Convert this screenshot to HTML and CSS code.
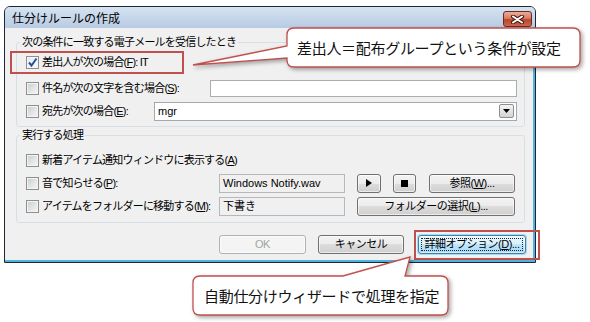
FILE: index.html
```html
<!doctype html>
<html>
  <head>
    <meta charset="utf-8">
    <title>仕分けルールの作成</title>
    <link rel="stylesheet" href="styles.css">
  </head>
  <body>
    <div class="stage">

      <div class="window">
        <div class="titlebar">
          <span class="title">仕分けルールの作成</span>
          <span class="close">
            <svg width="15" height="9" viewBox="0 0 15 9">
              <path d="M3 1.5 L12 7.5 M12 1.5 L3 7.5" stroke="#4a1a10" stroke-width="4" stroke-linecap="round"/>
              <path d="M3 1.5 L12 7.5 M12 1.5 L3 7.5" stroke="#fff" stroke-width="2" stroke-linecap="round"/>
            </svg>
          </span>
        </div>

        <div class="client">
          <div class="group g-cond">
            <div class="legend">次の条件に一致する電子メールを受信したとき</div>
            <div class="row r1">
              <span class="cb checked">
                <svg width="11" height="11" viewBox="0 0 11 11"><path d="M2 5.5 L4.5 8.5 L9.5 1.5" fill="none" stroke="#2a4f9c" stroke-width="2"/></svg>
              </span>
              <span class="lbl">差出人が次の場合(<u>F</u>): IT</span>
            </div>
            <div class="row r2">
              <span class="cb"></span>
              <span class="lbl">件名が次の文字を含む場合(<u>S</u>):</span>
              <span class="field subject"></span>
            </div>
            <div class="row r3">
              <span class="cb"></span>
              <span class="lbl">宛先が次の場合(<u>E</u>):</span>
              <span class="field combo">mgr
                <span class="drop"><svg width="7" height="4" viewBox="0 0 7 4"><path d="M0 0 H7 L3.5 4 Z" fill="#000"/></svg></span>
              </span>
            </div>
          </div>

          <div class="group g-action">
            <div class="legend">実行する処理</div>
            <div class="row r1">
              <span class="cb"></span>
              <span class="lbl">新着アイテム通知ウィンドウに表示する(<u>A</u>)</span>
            </div>
            <div class="row r2">
              <span class="cb"></span>
              <span class="lbl">音で知らせる(<u>P</u>):</span>
              <div class="controls">
                <span class="field ro">Windows Notify.wav</span>
                <span class="btn play"><svg width="6" height="8" viewBox="0 0 6 8"><path d="M0 0 L6 4 L0 8 Z" fill="#000"/></svg></span>
                <span class="btn stop"><svg width="7" height="7" viewBox="0 0 7 7"><rect width="7" height="7" fill="#000"/></svg></span>
                <span class="btn browse">参照(<u>W</u>)...</span>
              </div>
            </div>
            <div class="row r2">
              <span class="cb"></span>
              <span class="lbl">アイテムをフォルダーに移動する(<u>M</u>):</span>
              <div class="controls">
                <span class="field ro">下書き</span>
                <span class="btn folder">フォルダーの選択(<u>L</u>)...</span>
              </div>
            </div>
          </div>

          <div class="actions">
            <span class="btn ok">OK</span>
            <span class="btn cancel">キャンセル</span>
            <span class="btn default"><span class="focus">詳細オプション(<u>D</u>)...</span></span>
          </div>
        </div>
      </div>

      <svg class="marks" width="590" height="322" viewBox="0 0 590 322">
        <rect x="11" y="52" width="172" height="21" fill="none" stroke="#c0504d" stroke-width="2"/>
        <rect x="415" y="231" width="124" height="28" fill="none" stroke="#c0504d" stroke-width="2"/>
        <path class="bubble" d="M294 28 H573 Q580 28 580 35 V60 Q580 67 573 67 H294 Q287 67 287 60 V58 L193 65 L287 46 V35 Q287 28 294 28 Z"/>
        <path class="bubble" d="M200 276 H343 L410 257 L405 276 H441 Q448 276 448 283 V308 Q448 315 441 315 H200 Q193 315 193 308 V283 Q193 276 200 276 Z"/>
      </svg>

      <div class="note n1">差出人＝配布グループという条件が設定</div>
      <div class="note n2">自動仕分けウィザードで処理を指定</div>
    </div>
  </body>
</html>
```

FILE: styles.css
```css
* {
  margin: 0;
  padding: 0;
  box-sizing: border-box;
}
html, body {
  width: 590px;
  height: 322px;
  overflow: hidden;
  background: #fff;
  font-family: "Liberation Sans", "Noto Sans CJK JP", sans-serif;
  color: #000;
}
.stage {
  position: relative;
  width: 590px;
  height: 322px;
  padding: 6px 0 0 4px;
}

/* dialog window */
.window {
  width: 532px;
  height: 257px;
  border: 1px solid #1d2733;
  border-radius: 6px 6px 0 0;
  background: #f0f0f0;
  overflow: hidden;
}
.titlebar {
  height: 21px;
  display: flex;
  align-items: flex-start;
  padding: 5px 3px 0 7px;
  background: linear-gradient(#d6e3f1, #b7cbe3);
}
.title {
  font-size: 12px;
  line-height: 15px;
}
.close {
  margin: -1px 0 0 auto;
  width: 29px;
  height: 16px;
  border: 1px solid #6b2a1d;
  border-radius: 3px;
  background: linear-gradient(#e9ad9b, #d67d66 45%, #bb442c 55%, #cf6a4f);
  display: flex;
  align-items: center;
  justify-content: center;
}
.client {
  height: 234px;
  border-right: 2px solid #4db3df;
  border-bottom: 2px solid #4db3df;
  padding: 14px 0 0 11px;
}

/* group boxes */
.group {
  width: 509px;
  border: 1px solid #d5dfe5;
  border-radius: 3px;
}
.g-cond {
  height: 85px;
}
.g-action {
  height: 88px;
  margin-top: 8px;
}
.legend, .lbl {
  font-size: 11px;
  letter-spacing: -0.8px;
  white-space: nowrap;
}
.legend {
  width: fit-content;
  height: 14px;
  margin: -8px 0 0 3px;
  padding: 0 2px;
  background: #f0f0f0;
  line-height: 14px;
}
.row {
  display: flex;
  align-items: center;
  height: 20px;
  padding: 0 7px 0 9px;
}
.g-action .row {
  padding-right: 9px;
}
.g-cond .r1 { margin-top: 3px; }
.g-cond .r2 { margin-top: 6px; }
.g-cond .r3 { margin-top: 3px; }
.g-action .r1 { margin-top: 8px; }
.g-action .r2 { margin-top: 3px; }

.cb {
  flex: none;
  width: 13px;
  height: 13px;
  margin-right: 3px;
  border: 1px solid #8e8f8f;
  background: linear-gradient(135deg, #c8cacd 0%, #e4e5e6 55%, #f5f5f5 100%);
  box-shadow: inset 0 0 0 1px #f4f4f4;
}
.cb.checked {
  background: linear-gradient(135deg, #e8ebef, #fbfbfb);
}
.cb svg {
  display: block;
}
.lbl {
  line-height: 14px;
}
.lbl u, .btn u {
  text-underline-offset: 1px;
}

/* inputs */
.field {
  flex: none;
  margin-left: auto;
  height: 17px;
  border: 1px solid #abadb3;
  background: #fff;
  padding-left: 3px;
  font-size: 11px;
  line-height: 15px;
  white-space: nowrap;
}
.subject {
  width: 307px;
}
.combo {
  width: 363px;
  height: 19px;
  display: flex;
  align-items: center;
  justify-content: space-between;
  padding: 0 2px 0 3px;
  border-color: #a5a9ad;
}
.drop {
  width: 15px;
  height: 14px;
  border: 1px solid #8e8f8f;
  border-radius: 2px;
  background: linear-gradient(#f4f4f4, #d4d4d4);
  display: flex;
  align-items: center;
  justify-content: center;
}
.controls {
  flex: none;
  margin-left: auto;
  display: flex;
  align-items: center;
  gap: 12px;
}
.field.ro {
  margin-left: 0;
  width: 126px;
  height: 19px;
  line-height: 17px;
  background: #f0f0f0;
  border-color: #b5b9be;
}

/* buttons */
.btn {
  flex: none;
  height: 19px;
  border: 1px solid #707070;
  border-radius: 3px;
  background: linear-gradient(#f3f3f3 0%, #ebebeb 50%, #dddddd 50%, #cfcfcf 100%);
  box-shadow: inset 0 0 0 1px rgba(255, 255, 255, .6);
  display: flex;
  align-items: center;
  justify-content: center;
  font-size: 11px;
  line-height: 15px;
  letter-spacing: -0.5px;
  white-space: nowrap;
}
.play { width: 24px; }
.stop { width: 23px; }
.browse { width: 86px; margin-left: 1px; }
.folder { width: 158px; }

.actions {
  display: flex;
  justify-content: flex-end;
  gap: 12px;
  margin-top: 12px;
  padding-right: 7px;
}
.ok {
  width: 87px;
  color: #a3a3a3;
  border-color: #adb2b5;
  background: #f4f4f4;
}
.cancel {
  width: 86px;
}
.default {
  width: 108px;
  margin-left: 2px;
  padding: 2px;
  border-color: #3c7fb1;
  background: linear-gradient(#eaf6fd 0%, #d9f0fc 50%, #bee6fd 50%, #a7d9f5 100%);
  box-shadow: 0 0 0 1px #9fdcf5, inset 0 0 0 1px rgba(255, 255, 255, .5);
}
.focus {
  flex: 1;
  align-self: stretch;
  border: 1px dotted #222;
  display: flex;
  align-items: center;
  justify-content: center;
}

/* annotations */
.marks {
  position: absolute;
  left: 0;
  top: 0;
  pointer-events: none;
}
.bubble {
  fill: #fff;
  stroke: #c0504d;
  stroke-width: 1.3;
  filter: drop-shadow(2px 2px 2px rgba(0, 0, 0, .35));
}
.note {
  position: absolute;
  font-family: "Noto Sans CJK JP", sans-serif;
  font-size: 15px;
  line-height: 20px;
  letter-spacing: -0.3px;
  color: #111;
  white-space: nowrap;
}
.n1 {
  left: 297px;
  top: 38px;
}
.n2 {
  left: 204px;
  top: 286px;
}
```
